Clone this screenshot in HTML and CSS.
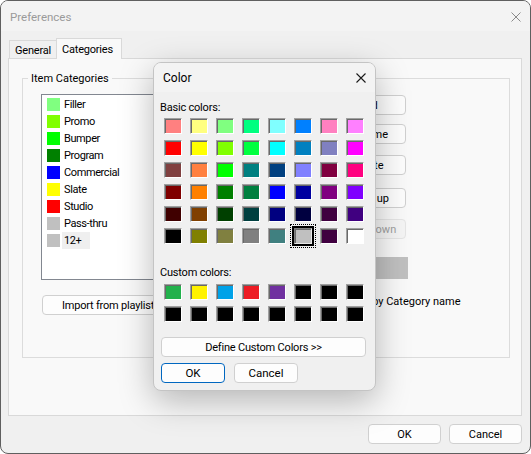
FILE: index.html
```html
<!DOCTYPE html>
<html lang="en">
<head>
  <meta charset="UTF-8">
  <title>Preferences</title>
  <link rel="stylesheet" href="styles.css">
</head>
<body>
  <div class="window">
    <div class="titlebar">
      <span class="title">Preferences</span>
      <svg class="close" width="10" height="10" viewBox="0 0 10 10">
        <path d="M0.5 0.5 L9.5 9.5 M9.5 0.5 L0.5 9.5" stroke="#8a8a8a" stroke-width="1"/>
      </svg>
    </div>

    <div class="tabs">
      <div class="tab">General</div>
      <div class="tab active">Categories</div>
    </div>

    <div class="panel">
      <fieldset class="group">
        <legend>Item Categories</legend>
        <div class="group-body">
          <div class="left-col">
            <ul class="cat-list">
              <li><span class="cat-swatch" style="background:#80ff80"></span><span class="cat-name">Filler</span></li>
              <li><span class="cat-swatch" style="background:#80ff00"></span><span class="cat-name">Promo</span></li>
              <li><span class="cat-swatch" style="background:#00ff00"></span><span class="cat-name">Bumper</span></li>
              <li><span class="cat-swatch" style="background:#008000"></span><span class="cat-name">Program</span></li>
              <li><span class="cat-swatch" style="background:#0000ff"></span><span class="cat-name">Commercial</span></li>
              <li><span class="cat-swatch" style="background:#ffff00"></span><span class="cat-name">Slate</span></li>
              <li><span class="cat-swatch" style="background:#ff0000"></span><span class="cat-name">Studio</span></li>
              <li><span class="cat-swatch" style="background:#c0c0c0"></span><span class="cat-name">Pass-thru</span></li>
              <li><span class="cat-swatch" style="background:#c0c0c0"></span><span class="cat-name focused">12+</span></li>
            </ul>
            <button class="btn import">Import from playlist</button>
          </div>
          <div class="right-col">
            <button class="btn side b-add">Add</button>
            <button class="btn side b-rename">Rename</button>
            <button class="btn side b-delete">Delete</button>
            <button class="btn side b-up">Move up</button>
            <button class="btn side b-down" disabled>Move down</button>
            <div class="color-bar"></div>
            <label class="check"><input type="checkbox">Sort by Category name</label>
          </div>
        </div>
      </fieldset>
    </div>

    <div class="footer">
      <button class="btn footer-btn">OK</button>
      <button class="btn footer-btn">Cancel</button>
    </div>

    <!-- Color picker dialog on top of the window -->
    <div class="color-dialog">
      <div class="dlg-titlebar">
        <span class="dlg-title">Color</span>
        <svg class="close" width="10" height="10" viewBox="0 0 10 10">
          <path d="M0.5 0.5 L9.5 9.5 M9.5 0.5 L0.5 9.5" stroke="#1a1a1a" stroke-width="1.1"/>
        </svg>
      </div>
      <div class="dlg-body">
        <div class="dlg-label">Basic colors:</div>
        <div class="swatch-grid basic">
          <span class="swatch" style="background:#ff8080"></span>
          <span class="swatch" style="background:#ffff80"></span>
          <span class="swatch" style="background:#80ff80"></span>
          <span class="swatch" style="background:#00ff80"></span>
          <span class="swatch" style="background:#80ffff"></span>
          <span class="swatch" style="background:#0080ff"></span>
          <span class="swatch" style="background:#ff80c0"></span>
          <span class="swatch" style="background:#ff80ff"></span>

          <span class="swatch" style="background:#ff0000"></span>
          <span class="swatch" style="background:#ffff00"></span>
          <span class="swatch" style="background:#80ff00"></span>
          <span class="swatch" style="background:#00ff40"></span>
          <span class="swatch" style="background:#00ffff"></span>
          <span class="swatch" style="background:#0080c0"></span>
          <span class="swatch" style="background:#8080c0"></span>
          <span class="swatch" style="background:#ff00ff"></span>

          <span class="swatch" style="background:#804040"></span>
          <span class="swatch" style="background:#ff8040"></span>
          <span class="swatch" style="background:#00ff00"></span>
          <span class="swatch" style="background:#008080"></span>
          <span class="swatch" style="background:#004080"></span>
          <span class="swatch" style="background:#8080ff"></span>
          <span class="swatch" style="background:#800040"></span>
          <span class="swatch" style="background:#ff0080"></span>

          <span class="swatch" style="background:#800000"></span>
          <span class="swatch" style="background:#ff8000"></span>
          <span class="swatch" style="background:#008000"></span>
          <span class="swatch" style="background:#008040"></span>
          <span class="swatch" style="background:#0000ff"></span>
          <span class="swatch" style="background:#0000a0"></span>
          <span class="swatch" style="background:#800080"></span>
          <span class="swatch" style="background:#8000ff"></span>

          <span class="swatch" style="background:#400000"></span>
          <span class="swatch" style="background:#804000"></span>
          <span class="swatch" style="background:#004000"></span>
          <span class="swatch" style="background:#004040"></span>
          <span class="swatch" style="background:#000080"></span>
          <span class="swatch" style="background:#000040"></span>
          <span class="swatch" style="background:#400040"></span>
          <span class="swatch" style="background:#400080"></span>

          <span class="swatch" style="background:#000000"></span>
          <span class="swatch" style="background:#808000"></span>
          <span class="swatch" style="background:#808040"></span>
          <span class="swatch" style="background:#808080"></span>
          <span class="swatch" style="background:#408080"></span>
          <span class="swatch selected" style="background:#c0c0c0"></span>
          <span class="swatch" style="background:#400040"></span>
          <span class="swatch" style="background:#ffffff"></span>
        </div>

        <div class="dlg-label custom-label">Custom colors:</div>
        <div class="swatch-grid custom">
          <span class="swatch" style="background:#22b14c"></span>
          <span class="swatch" style="background:#fff200"></span>
          <span class="swatch" style="background:#00a2e8"></span>
          <span class="swatch" style="background:#ed1c24"></span>
          <span class="swatch" style="background:#7030a0"></span>
          <span class="swatch" style="background:#000000"></span>
          <span class="swatch" style="background:#000000"></span>
          <span class="swatch" style="background:#000000"></span>

          <span class="swatch" style="background:#000000"></span>
          <span class="swatch" style="background:#000000"></span>
          <span class="swatch" style="background:#000000"></span>
          <span class="swatch" style="background:#000000"></span>
          <span class="swatch" style="background:#000000"></span>
          <span class="swatch" style="background:#000000"></span>
          <span class="swatch" style="background:#000000"></span>
          <span class="swatch" style="background:#000000"></span>
        </div>

        <button class="btn define">Define Custom Colors &gt;&gt;</button>
        <div class="dlg-actions">
          <button class="btn dlg-btn default">OK</button>
          <button class="btn dlg-btn">Cancel</button>
        </div>
      </div>
    </div>
  </div>
</body>
</html>
```

FILE: styles.css
```css
body {
  margin: 0;
  background: #ffffff;
  font-family: Roboto, 'Liberation Sans', sans-serif;
  font-size: 11px;
  color: #000;
}
.window {
  position: relative;
  width: 531px;
  height: 454px;
  box-sizing: border-box;
  border: 1px solid #5f5f5f;
  border-radius: 8px;
  background: #f0f0f0;
  overflow: hidden;
}
.titlebar {
  height: 30px;
  display: flex;
  align-items: center;
  padding: 1px 9px 0 9px;
  box-sizing: border-box;
  background: #f3f3f3;
}
.title {
  font-size: 11.5px;
  color: #9a9a9a;
}
.close {
  margin-left: auto;
  display: block;
}

/* tabs */
.tabs {
  display: flex;
  align-items: flex-end;
  margin-top: 7px;
  padding-left: 8px;
  position: relative;
  z-index: 1;
}
.tab {
  box-sizing: border-box;
  height: 18px;
  padding: 1px 5px 0;
  border: 1px solid #d9d9d9;
  border-bottom: none;
  background: #f0f0f0;
  line-height: 18px;
  letter-spacing: -0.2px;
}
.tab:first-child {
  width: 48px;
}
.tab.active {
  width: 66px;
  height: 21px;
  margin-bottom: -1px;
  margin-left: -1px;
  background: #f9f9f9;
  line-height: 19px;
  padding: 1px 5px 0;
}
.panel {
  box-sizing: border-box;
  height: 358px;
  margin: 0 8px 0 7px;
  border: 1px solid #d9d9d9;
  background: #f9f9f9;
  overflow: hidden;
}

/* group box */
.group {
  box-sizing: border-box;
  height: 288px;
  margin: 11px 11px 0 13px;
  padding: 0;
  border: 1px solid #dcdcdc;
  min-width: 0;
}
.group legend {
  margin-left: 5px;
  padding: 1px 3px 0;
  line-height: 16px;
}
.group-body {
  display: flex;
  padding: 7px 0 0 18px;
}
.left-col {
  width: 270px;
}
.cat-list {
  list-style: none;
  margin: 0;
  box-sizing: border-box;
  height: 186px;
  padding: 1px 0 0 5px;
  border: 1px solid #828790;
  background: #fff;
}
.cat-list li {
  display: flex;
  align-items: center;
  height: 17px;
}
.cat-swatch {
  width: 13px;
  height: 13px;
  margin-right: 2px;
}
.cat-name {
  padding: 1px 2px 0;
  line-height: 16px;
  letter-spacing: -0.4px;
}
.cat-name.focused {
  background: #efefef;
  padding-right: 9px;
}

/* buttons */
.btn {
  box-sizing: border-box;
  height: 20px;
  padding: 0;
  border: 1px solid #d0d0d0;
  border-radius: 4px;
  background: #fdfdfd;
  font-family: Roboto, 'Liberation Sans', sans-serif;
  font-size: 11px;
  color: #000;
}
.btn:disabled {
  color: #a0a0a0;
  border-color: #e5e5e5;
  background: #f5f5f5;
}
.import {
  width: 132px;
  margin: 15px 0 0 1px;
  letter-spacing: -0.2px;
}
.right-col {
  display: flex;
  flex-direction: column;
  width: 78px;
  margin-left: 19px;
}
.side {
  width: 76px;
}
.b-add { margin-top: 1px; }
.b-rename { margin-top: 9px; }
.b-delete { margin-top: 11px; }
.b-up { margin-top: 13px; }
.b-down { margin-top: 11px; }
.color-bar {
  width: 78px;
  height: 22px;
  margin-top: 18px;
  background: #c0c0c0;
}
.check {
  display: flex;
  align-items: center;
  white-space: nowrap;
  margin-top: 16px;
}
.check input {
  width: 13px;
  height: 13px;
  margin: 0 6px 0 0;
}
.footer {
  display: flex;
  justify-content: flex-end;
  gap: 8px;
  margin-top: 8px;
  padding-right: 8px;
}
.footer-btn {
  width: 73px;
}

/* color dialog */
.color-dialog {
  position: absolute;
  left: 152px;
  top: 61px;
  width: 223px;
  height: 329px;
  box-sizing: border-box;
  border: 1px solid #c4c4c4;
  border-radius: 8px;
  background: #f0f0f0;
  box-shadow: 0 10px 34px rgba(0, 0, 0, 0.28);
  overflow: hidden;
}
.dlg-titlebar {
  height: 29px;
  display: flex;
  align-items: center;
  padding: 0 9px;
  background: #f3f3f3;
}
.dlg-title {
  font-size: 12px;
}
.dlg-body {
  padding: 0 0 0 6px;
}
.dlg-label {
  height: 14px;
  line-height: 17px;
  margin-top: 7px;
  letter-spacing: -0.2px;
}
.custom-label {
  margin-top: 20px;
}
.swatch-grid {
  display: grid;
  grid-template-columns: repeat(8, 18px);
  grid-auto-rows: 16px;
  column-gap: 8px;
  row-gap: 6px;
  margin: 5px 0 0 4px;
}
.swatch-grid.custom {
  margin-top: 6px;
}
.swatch {
  box-sizing: border-box;
  border: 1px solid;
  border-color: #a0a0a0 #ffffff #ffffff #a0a0a0;
  box-shadow: inset 1px 1px 0 #696969;
}
.swatch.selected {
  border-color: #808080 #e8e8e8 #e8e8e8 #808080;
  box-shadow: inset 1px 1px 0 #696969, 0 0 0 2px #000;
  outline: 1px dotted #000;
  outline-offset: 3px;
}
.define {
  display: block;
  width: 205px;
  margin: 15px 0 0 1px;
  letter-spacing: -0.2px;
}
.dlg-actions {
  display: flex;
  gap: 9px;
  margin: 6px 0 0 1px;
}
.dlg-btn {
  width: 64px;
  font-size: 11.5px;
}
.dlg-btn.default {
  border-color: #0067c0;
}
```
